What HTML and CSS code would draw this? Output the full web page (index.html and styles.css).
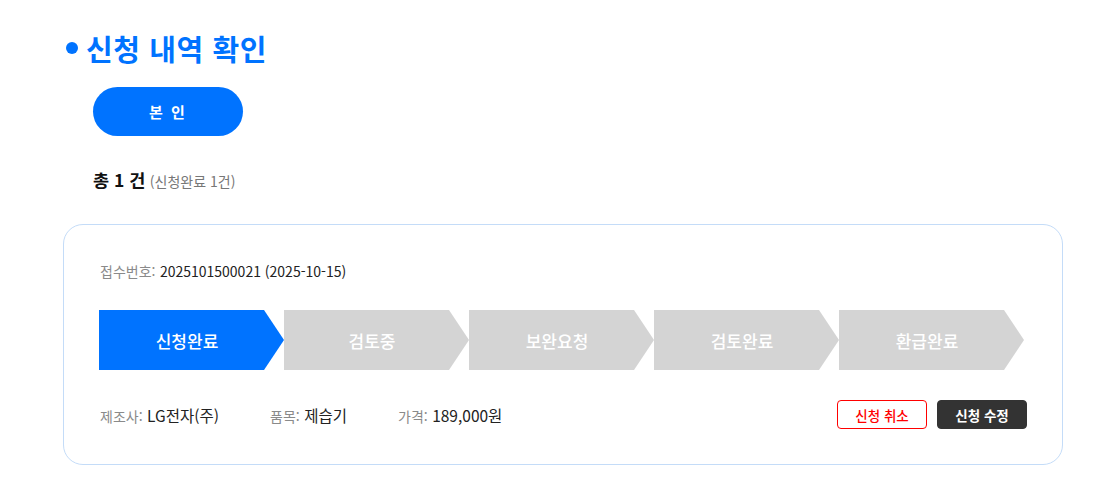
FILE: index.html
```html
<!DOCTYPE html>
<html lang="ko">
<head>
<meta charset="utf-8">
<link rel="stylesheet" href="styles.css">
</head>
<body>
<div class="page">
  <h1 class="title"><span class="dot"></span>신청 내역 확인</h1>
  <div class="tabs"><button class="tab">본 인</button></div>
  <div class="total"><strong>총 1 건</strong> <span class="sub">(신청완료 1건)</span></div>
  <div class="card">
    <div class="receipt"><span class="lbl">접수번호:</span> <span class="val">2025101500021 (2025-10-15)</span></div>
    <div class="steps">
      <div class="step active">신청완료</div>
      <div class="step">검토중</div>
      <div class="step">보완요청</div>
      <div class="step">검토완료</div>
      <div class="step">환급완료</div>
    </div>
    <div class="info">
      <div class="item w1"><span class="lbl">제조사:</span> <span class="val">LG전자(주)</span></div>
      <div class="item w2"><span class="lbl">품목:</span> <span class="val">제습기</span></div>
      <div class="item"><span class="lbl">가격:</span> <span class="val">189,000원</span></div>
      <div class="actions">
        <button class="btn cancel">신청 취소</button>
        <button class="btn edit">신청 수정</button>
      </div>
    </div>
  </div>
</div>
</body>
</html>
```
FILE: styles.css
```css
* { box-sizing: border-box; }
body {
  margin: 0;
  background: #fff;
  font-family: "Noto Sans CJK KR", "Noto Sans", sans-serif;
  color: #111;
}
.page {
  padding: 30px 48px 0 63px;
}
.title {
  margin: 0;
  display: flex;
  align-items: center;
  font-size: 29px;
  font-weight: 700;
  color: #0073ff;
  line-height: 36px;
  height: 36px;
  letter-spacing: 0.6px;
}
.dot {
  width: 12px;
  height: 12px;
  border-radius: 50%;
  background: #0073ff;
  margin: 0 8px 0 3px;
}
.tabs {
  margin-top: 21px;
  padding-left: 30px;
}
.tab {
  width: 150px;
  height: 49px;
  border: none;
  border-radius: 25px;
  background: #0073ff;
  color: #fff;
  font-family: inherit;
  font-size: 15px;
  font-weight: 700;
  letter-spacing: 2px;
}
.total {
  margin-top: 32px;
  padding-left: 30px;
  line-height: 24px;
  height: 24px;
}
.total strong {
  font-size: 17.5px;
  font-weight: 700;
  color: #111;
}
.sub {
  font-size: 14px;
  color: #777;
}
.card {
  margin-top: 32px;
  height: 241px;
  border: 1px solid #c4dcf8;
  border-radius: 20px;
  padding: 34px 35px 0 35px;
}
.lbl {
  color: #8a8a8a;
  font-size: 14px;
}
.val {
  color: #222;
  font-size: 14px;
}
.receipt {
  padding-left: 1px;
  line-height: 22px;
  height: 22px;
}
.steps {
  display: flex;
  margin-top: 29px;
}
.step {
  width: 185px;
  height: 60px;
  background: #d4d4d4;
  color: #fff;
  font-size: 17px;
  font-weight: 500;
  display: flex;
  align-items: center;
  justify-content: center;
  padding-right: 9px;
  clip-path: polygon(0 0, 165px 0, 185px 30px, 165px 60px, 0 60px);
}
.step.active {
  background: #0073ff;
}
.info {
  display: flex;
  align-items: center;
  margin-top: 30px;
  height: 29px;
  padding-left: 1px;
}
.info .val {
  font-size: 15.5px;
}
.item.w1 { width: 170px; }
.item.w2 { width: 128px; }
.actions {
  margin-left: auto;
  display: flex;
  gap: 10px;
}
.btn {
  width: 90px;
  height: 29px;
  border-radius: 4px;
  font-family: inherit;
  font-size: 13.5px;
  font-weight: 500;
  padding: 0;
}
.cancel {
  background: #fff;
  border: 1px solid #ff0000;
  color: #ff0000;
}
.edit {
  background: #333;
  border: 1px solid #333;
  color: #fff;
  font-weight: 700;
}
```
